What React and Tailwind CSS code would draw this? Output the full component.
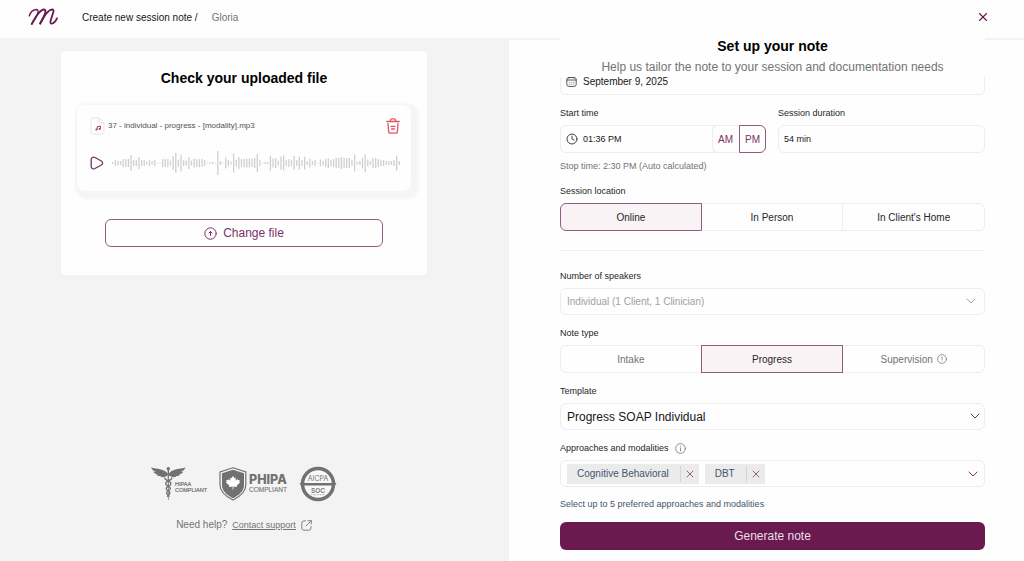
import { useState } from "react";
import { X, Clock, ChevronDown } from "lucide-react";

const WAVE = [
    2, 6, 5, 4, 8, 8, 8, 16, 6, 6, 12, 6, 6, 3, 6, 4, 7, 1, 1, 8, 8, 8, 5, 14,
    20, 7, 17, 6, 5, 12, 5, 9, 8, 8, 8, 6, 1, 2, 2, 1, 24, 4, 1, 11, 6, 3, 19,
    7, 12, 8, 9, 9, 9, 8, 10, 18, 6, 1, 2, 2, 15, 9, 10, 5, 13, 15, 6, 8, 6, 14,
    6, 13, 6, 13, 4, 9, 4, 6, 1, 7, 5, 8, 10, 6, 8, 10, 10, 12, 10, 10, 10, 6,
    17, 3, 4, 11, 18, 7, 4, 10, 10, 8, 6, 6, 4, 4, 4, 6, 15, 4,
];

const LogoIcon = () => (
    <svg width="30" height="18" viewBox="0 0 30 18" fill="none" stroke="#6b1a50" strokeLinecap="round" strokeLinejoin="round">
        <path d="M1.200 8C2.500 4 5.500 1.500 8.500 1.500c3.400.2 1 6-4.500 14.500" strokeWidth="1.300" />
        <path d="M3.700 16C8 8 12.500 1.400 16 1.500c3.300.3.500 6.500-3.800 14" strokeWidth="1.900" />
        <path d="M12.200 15.500C16 8 20.500 1.400 24.200 1.500c4 .4-2.600 9.500-1.700 13.300.9 2.300 4.600 0 6.500-4.400" strokeWidth="1.800" />
    </svg>
);

const FileIcon = () => (
    <svg width="15" height="18" viewBox="0 0 15 18" fill="none">
        <path d="M3 1h6l5 5v9a2 2 0 0 1-2 2H3a2 2 0 0 1-2-2V3a2 2 0 0 1 2-2Z" fill="#fefcfd" stroke="#f3ecef" strokeWidth="1.400" />
        <path d="M9 1v3a2 2 0 0 0 2 2h3" stroke="#eadfe4" />
        <path d="M7.200 12.300V9.800l3.200-.7v2.600" stroke="#a03468" />
        <circle cx="6.400" cy="12.500" r="1" fill="#a03468" />
        <circle cx="9.600" cy="11.900" r="1" fill="#a03468" />
    </svg>
);

const TrashIcon = () => (
    <svg width="14" height="16" viewBox="0 0 14 16" fill="none" stroke="#e05660" strokeWidth="1.300" strokeLinecap="round" strokeLinejoin="round">
        <path d="M.8 3.500h12.400M4.500 3.300V2.100C4.500 1.300 5 .8 5.800.8h2.400c.8 0 1.300.5 1.300 1.300v1.200" />
        <path d="M2 5.300l.6 8.300c.1 1 .7 1.600 1.700 1.600h5.400c1 0 1.600-.6 1.700-1.600l.6-8.300M5 8.300h4M5.600 11h2.800" />
    </svg>
);

const PlayIcon = () => (
    <svg width="14" height="14" viewBox="0 0 14 14" fill="none" stroke="#7a3264" strokeWidth="1.300" strokeLinejoin="round">
        <path d="M1.200 4.100c0-2.600 1.500-3.700 3.700-2.600l6 3.200c2.300 1.300 2.300 3.300 0 4.600l-6 3.200c-2.200 1.100-3.700 0-3.700-2.600Z" />
    </svg>
);

const UploadIcon = () => (
    <svg width="13" height="13" viewBox="0 0 13 13" fill="none" stroke="#7a3264" strokeLinecap="round" strokeLinejoin="round">
        <circle cx="6.500" cy="6.500" r="5.700" />
        <path d="M6.500 8.500V4.700M5 6l1.500-1.500L8 6" />
    </svg>
);

const CalendarIcon = () => (
    <svg width="11" height="11" viewBox="0 0 11 11" fill="none" stroke="#444" strokeWidth=".9" strokeLinecap="round">
        <rect x=".8" y="1.500" width="9.400" height="8.900" rx="2" />
        <path d="M3.200.5v1.700M7.800.5v1.700M1 4h9" />
        <path d="M3.200 6.300h4.800M3.200 8.200h4.800" stroke="#999" strokeDasharray=".6 1.500" />
    </svg>
);

const InfoIcon = ({ size, flipped }) => (
    <svg width={size} height={size} viewBox="0 0 12 12" fill="none" stroke="#777" strokeWidth=".9" strokeLinecap="round">
        <circle cx="6" cy="6" r="5.300" />
        <path d={flipped ? "M6 3.300v3.200M6 8.500v.1" : "M6 5.300v3.300M6 3.400v.1"} />
    </svg>
);

const ExternalIcon = () => (
    <svg width="11" height="11" viewBox="0 0 11 11" fill="none" stroke="#757575" strokeWidth=".9" strokeLinecap="round" strokeLinejoin="round">
        <path d="M4.500.9H3A2.200 2.200 0 0 0 .8 3.100V8A2.200 2.200 0 0 0 3 10.200h4.800A2.200 2.200 0 0 0 10 8V6.500M5.300 5.700 10.200.8M7 .7h3.300V4" />
    </svg>
);

const HipaaBadge = () => (
    <svg width="57" height="36" viewBox="0 0 57 36" fill="#717171" fontFamily="Liberation Sans, Arial, sans-serif">
        <path d="M17 8C13 2.500 6 3.400 0 1.600c1 2.400 2.800 3.600 4.800 4-.9.100-1.800 0-2.600-.2 1.100 2.100 3 2.700 4.900 2.700l-1.800.3c1.500 1.600 3.300 1.800 5 1.400l-1.100.8c2.700 1.200 5.500.4 7.800-1.600Z" />
        <path d="M17.600 8c4-5.500 11-4.600 17-6.400-1 2.400-2.800 3.600-4.800 4 .9.100 1.800 0 2.600-.2-1.100 2.100-3 2.700-4.900 2.700l1.800.3c-1.500 1.600-3.300 1.800-5 1.400l1.100.8c-2.700 1.200-5.500.4-7.800-1.600Z" />
        <circle cx="17.300" cy="2.700" r="1.700" />
        <path d="M16.600 4h1.400l-.4 30h-.6Z" />
        <g fill="none" stroke="#717171" strokeWidth="1.300">
            <path d="M14 11.500c-1.500 3 6.700 3.300 5.900 6.300-.6 2.500-5 2.300-4.700 4.900.2 2 4 2.300 3.800 4.200-.2 1.700-2.700 2-2.600 4" />
            <path d="M20.600 11.500c1.500 3-6.700 3.300-5.900 6.300.6 2.500 5 2.300 4.700 4.900-.2 2-4 2.300-3.800 4.200.2 1.700 2.700 2 2.600 4" />
        </g>
        <text x="24" y="20" fontSize="5.500" stroke="#717171" strokeWidth=".2">HIPAA</text>
        <text x="24" y="26" fontSize="5.500" stroke="#717171" strokeWidth=".2">COMPLIANT</text>
    </svg>
);

const PhipaBadge = () => (
    <svg width="69" height="34" viewBox="0 0 69 34">
        <path d="M14 .8 26.800 5v13c0 7-5.800 11.500-12.800 15C7 29.500 1 25 1 18V5Z" fill="#f4f4f4" stroke="#717171" strokeWidth="1.200" />
        <path d="M14 2.700 25 6.300V18c0 5.900-4.600 9.900-11 13.200C7.600 27.900 3 23.900 3 18V6.300Z" fill="#717171" />
        <path d="m14 8.700 1.400 2.500 1.500-.8-.5 3.400 2-1.700.5 1.200 2-.3-.7 2 .9.600-3.400 2.800.3 1.500-3.600-.5v3h-.8v-3l-3.600.5.3-1.500-3.400-2.800.9-.6-.7-2 2 .3.500-1.200 2 1.700-.5-3.400 1.500.8Z" fill="#fff" />
        <text x="30" y="17" fontSize="12.500" fontWeight="800" fill="#717171" fontFamily="Inter, sans-serif">PHIPA</text>
        <text x="30" y="25" fontSize="6.500" fill="#717171" stroke="#717171" strokeWidth=".1" fontFamily="Liberation Sans, Arial, sans-serif">COMPLIANT</text>
    </svg>
);

const SocBadge = () => (
    <svg width="38" height="36" viewBox="0 0 38 36" fill="#717171" fontFamily="Inter, sans-serif">
        <circle cx="19" cy="18" r="15.500" fill="#f8f8f8" stroke="#717171" strokeWidth="3.500" />
        <path d="M.5 17h37l-1.500 2.500H2Z" />
        <text x="19" y="15" fontSize="7" textAnchor="middle">AICPA</text>
        <text x="19" y="26.500" fontSize="6.500" fontWeight="600" textAnchor="middle">SOC</text>
        <path d="M12 28.700h14" stroke="#999" strokeWidth=".7" strokeDasharray="1 .5" />
    </svg>
);

const Waveform = () => (
    <svg className="min-w-0 flex-1" height="24" viewBox="0 0 288 24" preserveAspectRatio="none" fill="#cfcfcf">
        {WAVE.map((h, i) => (
            <rect key={i} x={i * 2.63} y={12 - h / 2} width="1.300" height={h} rx=".5" />
        ))}
    </svg>
);

const ButtonGroup = ({ label, options, value, onChange, muted }) => (
    <fieldset className="min-w-0">
        <legend className="mb-[6px] text-[9px] leading-3 text-neutral-800">{label}</legend>
        <div className="grid h-7 grid-cols-3">
            {options.map((option) => (
                <button
                    key={option}
                    type="button"
                    aria-pressed={value === option}
                    onClick={() => onChange(option)}
                    className={`flex items-center justify-center gap-1 border text-[10px] first:rounded-l-md last:rounded-r-md not-first:-ml-px ${
                        value === option
                            ? "relative border-[#935b83] bg-[#f9f3f6] text-neutral-800"
                            : muted
                              ? "border-[#ededed] text-neutral-500"
                              : "border-[#ededed] text-neutral-800"
                    }`}
                >
                    {option}
                    {option === "Supervision" && <InfoIcon size={10} flipped />}
                </button>
            ))}
        </div>
    </fieldset>
);

const SelectField = ({ id, label, children, disabled, className }) => (
    <div>
        <label htmlFor={id} className="mb-[6px] block text-[9px] leading-3 text-neutral-800">
            {label}
        </label>
        <div className="relative">
            <select
                id={id}
                disabled={disabled}
                className={`block h-[27px] w-full appearance-none rounded-md border border-[#ededed] bg-transparent pl-[6px] ${className}`}
            >
                {children}
            </select>
            <ChevronDown
                size={16}
                strokeWidth={1.5}
                className={`pointer-events-none absolute top-[5px] ${disabled ? "right-[6px] text-neutral-400" : "right-[2px] text-[#7a3264]"}`}
            />
        </div>
    </div>
);

const App = () => {
    const [period, setPeriod] = useState("PM");
    const [location, setLocation] = useState("Online");
    const [noteType, setNoteType] = useState("Progress");
    const [tags, setTags] = useState(["Cognitive Behavioral", "DBT"]);

    return (
        <div className="flex min-h-screen flex-col bg-[#fefefe] font-['Liberation_Sans',Arial,sans-serif] text-neutral-900">
            {/* Top bar */}
            <header className="flex h-[38px] items-center pr-[34px] pb-1 pl-7 text-[10px]">
                <a href="/" aria-label="Home">
                    <LogoIcon />
                </a>
                <span className="ml-6">Create new session note /</span>
                <span className="ml-[14px] text-neutral-500">Gloria</span>
                <button type="button" aria-label="Close" className="ml-auto text-[#6b1a50]">
                    <X size={14} strokeWidth={2} />
                </button>
            </header>

            <main className="grid flex-1 grid-cols-[minmax(0,509fr)_minmax(0,515fr)]">
                {/* Uploaded file */}
                <section className="flex flex-col justify-between bg-[#f3f3f3] pt-[13px] pr-[82px] pb-[30px] pl-[61px]">
                    <div className="rounded bg-[#fefefe] px-4 pt-[18px] pb-7">
                        <h2 className="text-center text-sm leading-[18px] font-bold text-black">Check your uploaded file</h2>
                        <div className="mt-[18px] rounded-lg bg-[#fefefe] pt-3 pr-[11px] pb-4 pl-[13px] shadow-[3px_3px_3px_5px_#f5f5f5]">
                            <div className="flex items-center">
                                <FileIcon />
                                <span className="ml-[3px] text-[8px] text-neutral-600">37 - individual - progress - [modality].mp3</span>
                                <button type="button" aria-label="Delete file" className="ml-auto">
                                    <TrashIcon />
                                </button>
                            </div>
                            <div className="mt-4 flex items-center gap-2">
                                <button type="button" aria-label="Play">
                                    <PlayIcon />
                                </button>
                                <Waveform />
                            </div>
                        </div>
                        <button
                            type="button"
                            className="mx-auto mt-7 flex h-7 w-5/6 items-center justify-center gap-[6px] rounded-md border border-[#935b83] text-xs text-[#7a3264]"
                        >
                            <UploadIcon />
                            Change file
                        </button>
                    </div>

                    <div>
                        <div className="flex items-center justify-center gap-[11px]">
                            <HipaaBadge />
                            <PhipaBadge />
                            <SocBadge />
                        </div>
                        <div className="mt-[17px] flex items-center justify-center gap-[5px] text-[10px] leading-3 text-neutral-500">
                            Need help?
                            <a href="/support" className="text-[9px] underline">
                                Contact support
                            </a>
                            <ExternalIcon />
                        </div>
                    </div>
                </section>

                {/* Note settings */}
                <section className="border-t-2 border-[#f3f3f3] pr-[39px] pb-[11px] pl-[51px]">
                    <div className="relative z-10 -mt-[2px] bg-[#fefefe] pb-[3px] text-center">
                        <h1 className="text-sm leading-4 font-bold text-black">Set up your note</h1>
                        <p className="mt-[7px] text-xs leading-[13px] text-neutral-500">
                            Help us tailor the note to your session and documentation needs
                        </p>
                    </div>

                    <form onSubmit={(e) => e.preventDefault()}>
                        <div className="-mt-[10px] flex h-7 items-center gap-[6px] rounded-md border border-[#ededed] px-[5px]">
                            <CalendarIcon />
                            <input aria-label="Session date" defaultValue="September 9, 2025" className="h-full min-w-0 flex-1 text-[10px]" />
                        </div>

                        <div className="mt-3 grid grid-cols-[206fr_207fr] gap-3">
                            <div>
                                <label htmlFor="start" className="mb-[6px] block text-[9px] leading-3 text-neutral-800">
                                    Start time
                                </label>
                                <div className="flex h-7 items-center rounded-md border border-[#ededed] pl-[5px]">
                                    <Clock size={12} strokeWidth={2} className="text-neutral-700" />
                                    <input id="start" defaultValue="01:36 PM" className="ml-[5px] h-full min-w-0 flex-1 text-[9px]" />
                                    {["AM", "PM"].map((item) => (
                                        <button
                                            key={item}
                                            type="button"
                                            aria-pressed={period === item}
                                            onClick={() => setPeriod(item)}
                                            className={`-my-px h-7 w-[27px] border text-[10px] text-[#7a3264] first-of-type:rounded-l-md last:-mr-px last:rounded-r-md ${
                                                period === item ? "border-[#935b83]" : "border-[#ededed] border-r-transparent"
                                            }`}
                                        >
                                            {item}
                                        </button>
                                    ))}
                                </div>
                            </div>
                            <div>
                                <label htmlFor="duration" className="mb-[6px] block text-[9px] leading-3 text-neutral-800">
                                    Session duration
                                </label>
                                <input
                                    id="duration"
                                    defaultValue="54 min"
                                    className="block h-7 w-full rounded-md border border-[#ededed] px-[5px] text-[9px]"
                                />
                            </div>
                        </div>
                        <p className="mt-[7px] mb-[13px] text-[9px] leading-3 text-neutral-500">Stop time: 2:30 PM (Auto calculated)</p>

                        <ButtonGroup
                            label="Session location"
                            options={["Online", "In Person", "In Client's Home"]}
                            value={location}
                            onChange={setLocation}
                        />

                        <hr className="my-[19px] border-[#ededed]" />

                        <div className="flex flex-col gap-3">
                            <SelectField id="speakers" label="Number of speakers" disabled className="text-[10px] text-neutral-400">
                                <option>Individual (1 Client, 1 Clinician)</option>
                            </SelectField>

                            <ButtonGroup
                                label="Note type"
                                options={["Intake", "Progress", "Supervision"]}
                                value={noteType}
                                onChange={setNoteType}
                                muted
                            />

                            <SelectField id="template" label="Template" className="text-xs">
                                <option>Progress SOAP Individual</option>
                            </SelectField>

                            <div>
                                <div className="mb-[6px] flex items-center gap-[6px] text-[9px] leading-3 text-neutral-800">
                                    Approaches and modalities
                                    <InfoIcon size={11} />
                                </div>
                                <div className="flex h-[27px] items-center gap-[6px] rounded-md border border-[#ededed] pr-[3px] pl-[6px]">
                                    {tags.map((tag) => (
                                        <span key={tag} className="flex h-5 items-center bg-[#ebebeb] pl-[10px] text-[10px] text-slate-600">
                                            {tag}
                                            <button
                                                type="button"
                                                aria-label={`Remove ${tag}`}
                                                onClick={() => setTags(tags.filter((t) => t !== tag))}
                                                className="ml-[11px] flex h-4 items-center border-l border-neutral-300 px-[3px] text-[#7a3264]"
                                            >
                                                <X size={12} strokeWidth={1.5} />
                                            </button>
                                        </span>
                                    ))}
                                    <button type="button" aria-label="Show approaches" className="ml-auto text-[#7a3264]">
                                        <ChevronDown size={16} strokeWidth={1.5} />
                                    </button>
                                </div>
                            </div>
                        </div>

                        <p className="mt-[11px] text-[9px] leading-3 text-slate-600">Select up to 5 preferred approaches and modalities</p>
                        <button type="submit" className="mt-3 block h-7 w-full rounded-md bg-[#6b1a50] text-xs text-[#e9dfe6]">
                            Generate note
                        </button>
                    </form>
                </section>
            </main>
        </div>
    );
};

export default App;
